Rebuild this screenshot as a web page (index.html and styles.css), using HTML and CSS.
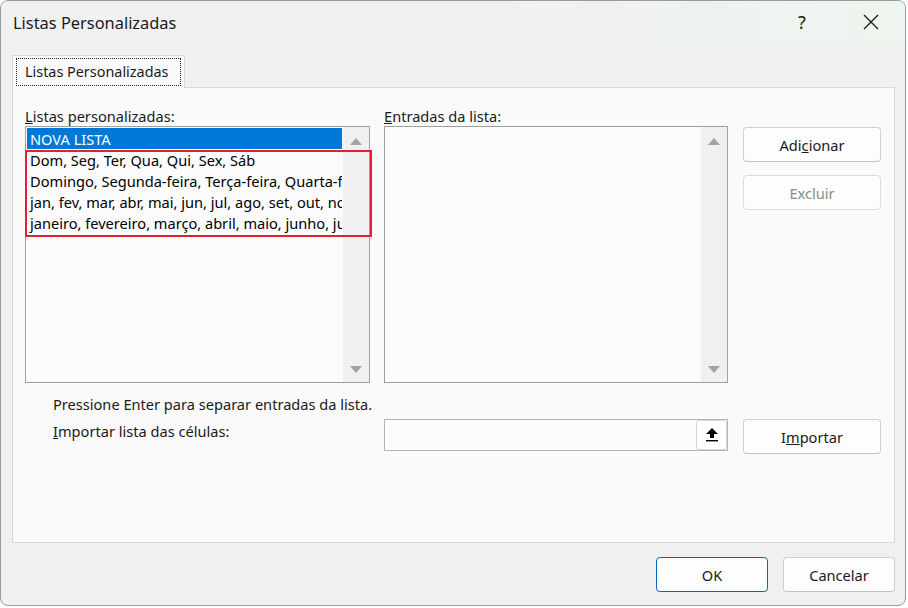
FILE: index.html
```html
<!DOCTYPE html>
<html lang="pt">
<head>
<meta charset="utf-8">
<title>Listas Personalizadas</title>
<link rel="stylesheet" href="styles.css">
</head>
<body>
<div class="window">
  <div class="titlebar">
    <span class="title">Listas Personalizadas</span>
    <div class="caption">
      <span class="help">?</span>
      <span class="close"><svg width="16" height="16" viewBox="0 0 16 16"><path d="M1 1 L15 15 M15 1 L1 15" stroke="#1a1a1a" stroke-width="1.3" fill="none"/></svg></span>
    </div>
  </div>
  <div class="body">
    <div class="tabs">
      <div class="tab"><span class="tab-label">Listas Personalizadas</span></div>
    </div>
    <div class="panel">
      <div class="grid">
        <div class="col">
          <div class="label"><u>L</u>istas personalizadas:</div>
          <div class="listbox">
            <div class="items">
              <div class="item selected">NOVA LISTA</div>
              <div class="item">Dom, Seg, Ter, Qua, Qui, Sex, Sáb</div>
              <div class="item">Domingo, Segunda-feira, Terça-feira, Quarta-feira, Quinta-feira, Sexta-feira, Sábado</div>
              <div class="item">jan, fev, mar, abr, mai, jun, jul, ago, set, out, nov, dez</div>
              <div class="item">janeiro, fevereiro, março, abril, maio, junho, julho, agosto, setembro, outubro, novembro, dezembro</div>
            </div>
            <div class="scrollbar"><span class="arrow up"></span><span class="arrow down"></span></div>
            <div class="highlight"></div>
          </div>
        </div>
        <div class="col">
          <div class="label"><u>E</u>ntradas da lista:</div>
          <div class="listbox entries">
            <div class="items"></div>
            <div class="scrollbar"><span class="arrow up"></span><span class="arrow down"></span></div>
          </div>
        </div>
        <div class="col btns">
          <button class="btn">Adi<u>c</u>ionar</button>
          <button class="btn disabled">Excluir</button>
        </div>
      </div>
      <div class="hint">Pressione Enter para separar entradas da lista.</div>
      <div class="grid import-row">
        <div class="import-label"><u>I</u>mportar lista das células:</div>
        <div class="input">
          <span class="collapse"><svg width="14" height="16" viewBox="0 0 14 16"><path d="M7 1 L13 7 L9 7 L9 11 L5 11 L5 7 L1 7 Z" fill="#000"/><rect x="1" y="13" width="12" height="1.4" fill="#000"/></svg></span>
        </div>
        <button class="btn">I<u>m</u>portar</button>
      </div>
    </div>
    <div class="footer">
      <button class="btn wide default">OK</button>
      <button class="btn wide">Cancelar</button>
    </div>
  </div>
</div>
</body>
</html>
```

FILE: styles.css
```css
html, body {
  margin: 0;
  padding: 0;
  background: #ffffff;
}
body {
  font-family: "Noto Sans", "Open Sans", sans-serif;
  font-size: 14.6px;
  color: #1a1a1a;
}
.window {
  box-sizing: border-box;
  width: 906px;
  height: 606px;
  border: 1px solid #9a9a9a;
  border-radius: 8px;
  background: #f0f0f0;
  overflow: hidden;
  display: flex;
  flex-direction: column;
}
.titlebar {
  height: 43px;
  display: flex;
  align-items: center;
  justify-content: space-between;
  padding-left: 12px;
  background: linear-gradient(90deg, #f1f1f1 55%, #edf5ef 100%);
}
.title {
  font-size: 16.4px;
  color: #1a1a1a;
}
.caption {
  display: flex;
  align-items: center;
  height: 100%;
}
.help {
  font-size: 18px;
  width: 70px;
  text-align: center;
  margin-right: 0;
}
.close {
  width: 68px;
  display: flex;
  justify-content: center;
  align-items: center;
}
.body {
  flex: 1;
  display: flex;
  flex-direction: column;
  padding: 12px 10px 13px 11px;
}
.tabs {
  display: flex;
  height: 32px;
}
.tab {
  box-sizing: border-box;
  width: 173px;
  height: 33px;
  border: 1px solid #d9d9d9;
  border-bottom: none;
  background: #fafafa;
  padding: 2px 4px 1px 3px;
  position: relative;
  z-index: 1;
}
.tab-label {
  display: block;
  box-sizing: border-box;
  width: 165px;
  height: 28px;
  border: 1px dotted #222;
  line-height: 26px;
  padding-left: 8px;
  font-size: 14.4px;
}
.panel {
  box-sizing: border-box;
  height: 456px;
  border: 1px solid #d9d9d9;
  background: #fafafa;
  padding: 18px 14px 0 12px;
}
.grid {
  display: grid;
  grid-template-columns: 345px 344px 138px;
  column-gap: 14px;
}
.grid > :nth-child(3) {
  margin-left: 1px;
}
.label {
  line-height: 20px;
  height: 20px;
}
.listbox {
  position: relative;
  box-sizing: border-box;
  height: 257px;
  border: 1px solid #a0a0a0;
  background: #fcfcfc;
  display: flex;
}
.items {
  flex: 1;
  min-width: 0;
  padding: 1px 1px 0 1px;
  overflow: hidden;
}
.item {
  height: 21px;
  line-height: 22px;
  padding-left: 3px;
  white-space: nowrap;
  overflow: hidden;
  color: #000;
}
.item.selected {
  background: #0078d7;
  color: #fff;
}
.scrollbar {
  width: 26px;
  background: #f0f0f0;
  position: relative;
}
.arrow {
  position: absolute;
  left: 7px;
  width: 0;
  height: 0;
  border-left: 6px solid transparent;
  border-right: 6px solid transparent;
}
.arrow.up {
  top: 11px;
  border-bottom: 7px solid #a3a3a3;
}
.arrow.down {
  bottom: 9px;
  border-top: 7px solid #a3a3a3;
}
.highlight {
  position: absolute;
  left: -1px;
  top: 23px;
  width: 347px;
  height: 87px;
  box-sizing: border-box;
  border: 2px solid #e0222e;
  pointer-events: none;
}
.btns {
  display: flex;
  flex-direction: column;
  gap: 13px;
  padding-top: 21px;
}
.btn {
  box-sizing: border-box;
  width: 138px;
  height: 35px;
  border: 1px solid #d0d0d0;
  border-bottom-color: #c2c2c2;
  border-radius: 4px;
  background: #fdfdfd;
  font-family: inherit;
  font-size: 14.6px;
  color: #1a1a1a;
  padding: 0;
}
.btn.disabled {
  color: #8a8a8a;
  border-color: #dcdcdc;
}
.hint {
  margin-top: 11px;
  padding-left: 28px;
  line-height: 20px;
  height: 20px;
}
.import-row {
  margin-top: 5px;
  align-items: start;
}
.import-label {
  padding-left: 28px;
  line-height: 20px;
  margin-top: 2px;
}
.input {
  box-sizing: border-box;
  height: 32px;
  border: 1px solid #b4b4b4;
  background: #fcfcfc;
  display: flex;
  justify-content: flex-end;
}
.collapse {
  box-sizing: border-box;
  width: 31px;
  height: 30px;
  border: 1px solid #d6d6d6;
  border-radius: 3px;
  background: #fff;
  display: flex;
  align-items: center;
  justify-content: center;
}
.footer {
  margin-top: 14px;
  display: flex;
  justify-content: flex-end;
  gap: 15px;
}
.btn.wide {
  width: 112px;
}
.btn.default {
  border: 1px solid #0067c0;
}
```
